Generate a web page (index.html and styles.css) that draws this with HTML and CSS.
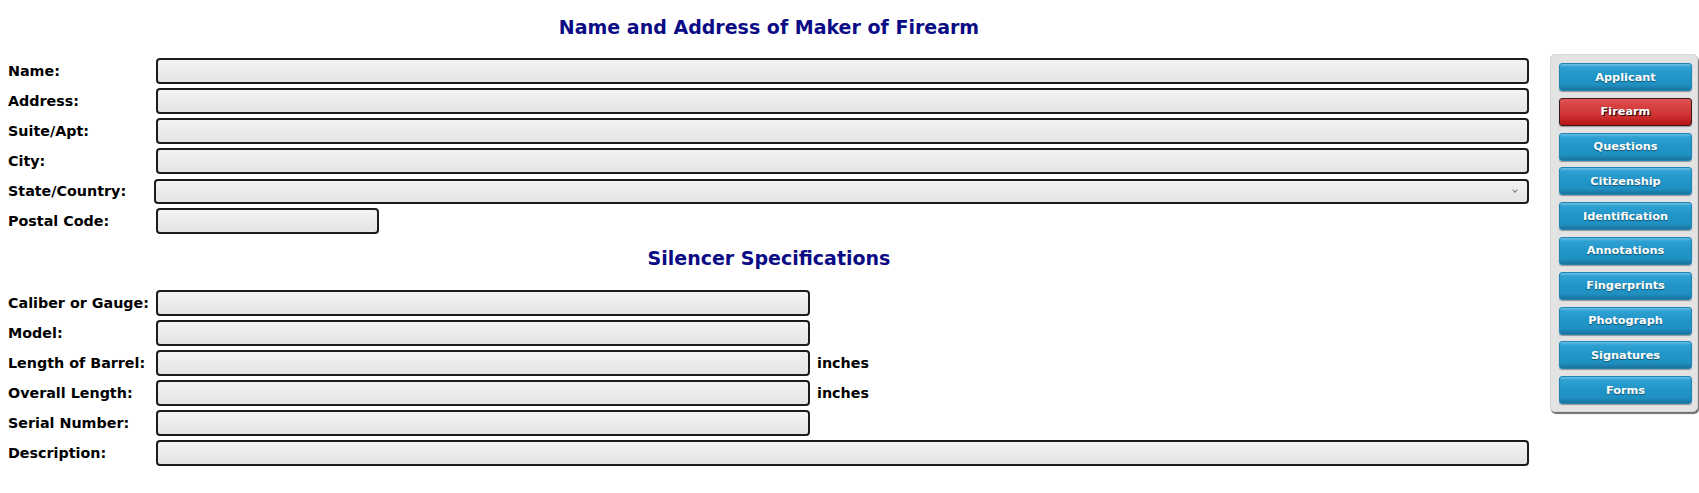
FILE: index.html
```html
<!DOCTYPE html>
<html lang="en">
<head>
<meta charset="utf-8">
<title>Firearm</title>
<link rel="stylesheet" href="styles.css">
</head>
<body>
<div class="page">
  <main class="form">
    <h2 class="section-title first">Name and Address of Maker of Firearm</h2>
    <div class="fields">
      <label class="lbl">Name:</label>
      <div class="ctl"><input class="field full" type="text"></div>
      <label class="lbl">Address:</label>
      <div class="ctl"><input class="field full" type="text"></div>
      <label class="lbl">Suite/Apt:</label>
      <div class="ctl"><input class="field full" type="text"></div>
      <label class="lbl">City:</label>
      <div class="ctl"><input class="field full" type="text"></div>
      <label class="lbl">State/Country:</label>
      <div class="ctl"><div class="select-wrap"><select class="field select"><option></option></select></div></div>
      <label class="lbl">Postal Code:</label>
      <div class="ctl"><input class="field postal" type="text"></div>
    </div>
    <h2 class="section-title second">Silencer Specifications</h2>
    <div class="fields">
      <label class="lbl">Caliber or Gauge:</label>
      <div class="ctl"><input class="field short" type="text"></div>
      <label class="lbl">Model:</label>
      <div class="ctl"><input class="field short" type="text"></div>
      <label class="lbl">Length of Barrel:</label>
      <div class="ctl"><input class="field short" type="text"><span class="unit">inches</span></div>
      <label class="lbl">Overall Length:</label>
      <div class="ctl"><input class="field short" type="text"><span class="unit">inches</span></div>
      <label class="lbl">Serial Number:</label>
      <div class="ctl"><input class="field short" type="text"></div>
      <label class="lbl">Description:</label>
      <div class="ctl"><input class="field full" type="text"></div>
    </div>
  </main>
  <nav class="sidebar">
    <a class="nav-btn">Applicant</a>
    <a class="nav-btn active">Firearm</a>
    <a class="nav-btn">Questions</a>
    <a class="nav-btn">Citizenship</a>
    <a class="nav-btn">Identification</a>
    <a class="nav-btn">Annotations</a>
    <a class="nav-btn">Fingerprints</a>
    <a class="nav-btn">Photograph</a>
    <a class="nav-btn">Signatures</a>
    <a class="nav-btn">Forms</a>
  </nav>
</div>
</body>
</html>
```

FILE: styles.css
```css
html, body {
  margin: 0;
  padding: 0;
  background: #ffffff;
  overflow: hidden;
}

body {
  font-family: "DejaVu Sans", Verdana, sans-serif;
  color: #000;
}

.page {
  display: flex;
  align-items: flex-start;
  gap: 20px;
  padding: 0 1px 0 8px;
}

.form {
  flex: 1;
  min-width: 0;
}

.section-title {
  margin: 0;
  text-align: center;
  font-size: 19px;
  line-height: 24px;
  font-weight: bold;
  color: #0b0b86;
}

.section-title.first {
  margin-top: 15px;
  margin-bottom: 17px;
}

.section-title.second {
  margin-top: 10px;
  margin-bottom: 18px;
}

.fields {
  display: grid;
  grid-template-columns: 148px 1fr;
  grid-auto-rows: 30px;
}

.lbl {
  font-size: 14.3px;
  font-weight: bold;
  line-height: 30px;
  white-space: nowrap;
}

.ctl {
  display: flex;
  align-items: center;
  gap: 7px;
}

.field {
  box-sizing: border-box;
  height: 26px;
  margin: 0;
  padding: 0 6px;
  border: 2px solid #1c1c1c;
  border-radius: 4px;
  background: linear-gradient(to bottom, #f3f3f3 0%, #ebebeb 50%, #e4e4e4 100%);
  font-family: "DejaVu Sans", Verdana, sans-serif;
  font-size: 13px;
  outline: none;
}

.full {
  width: calc(100% - 1px);
}

.short {
  width: 654px;
}

.postal {
  width: 223px;
}

.unit {
  font-size: 14.3px;
  font-weight: bold;
}

.select-wrap {
  position: relative;
  width: calc(100% + 1px);
  margin-left: -2px;
}

.select {
  -webkit-appearance: none;
  appearance: none;
  display: block;
  width: 100%;
  height: 25px;
  border-radius: 4px;
}

.select-wrap::after {
  content: "";
  position: absolute;
  right: 12px;
  top: 9px;
  width: 3px;
  height: 3px;
  border-right: 1px solid #7a7a7a;
  border-bottom: 1px solid #7a7a7a;
  transform: rotate(45deg);
  pointer-events: none;
}

.sidebar {
  box-sizing: border-box;
  width: 148px;
  margin-top: 54px;
  padding: 8px 5px 7px 8px;
  display: flex;
  flex-direction: column;
  gap: 6.8px;
  background: #e3e3e3;
  border: 1px solid #d6d6d6;
  border-radius: 5px;
  box-shadow: 1px 2px 1px #6e6e6e;
}

.nav-btn {
  display: flex;
  align-items: center;
  justify-content: center;
  box-sizing: border-box;
  height: 28px;
  border-radius: 3px;
  border: 1px solid #1d86b6;
  background: linear-gradient(to bottom, #6cc0e4 0%, #2fa0d2 12%, #2196c9 45%, #1f90c2 80%, #1a739c 100%);
  box-shadow: 0 1px 1px rgba(0, 0, 0, 0.35);
  color: #ffffff;
  font-size: 11.3px;
  font-weight: bold;
  text-shadow: 0 1px 1px rgba(0, 0, 0, 0.45);
  cursor: pointer;
  text-decoration: none;
}

.nav-btn.active {
  border: 1px solid #3a1c1c;
  background: linear-gradient(to bottom, #e25656 0%, #d84444 20%, #cf3434 60%, #b81414 100%);
  text-shadow: 1px 1px 0 #1a0000;
}
```
